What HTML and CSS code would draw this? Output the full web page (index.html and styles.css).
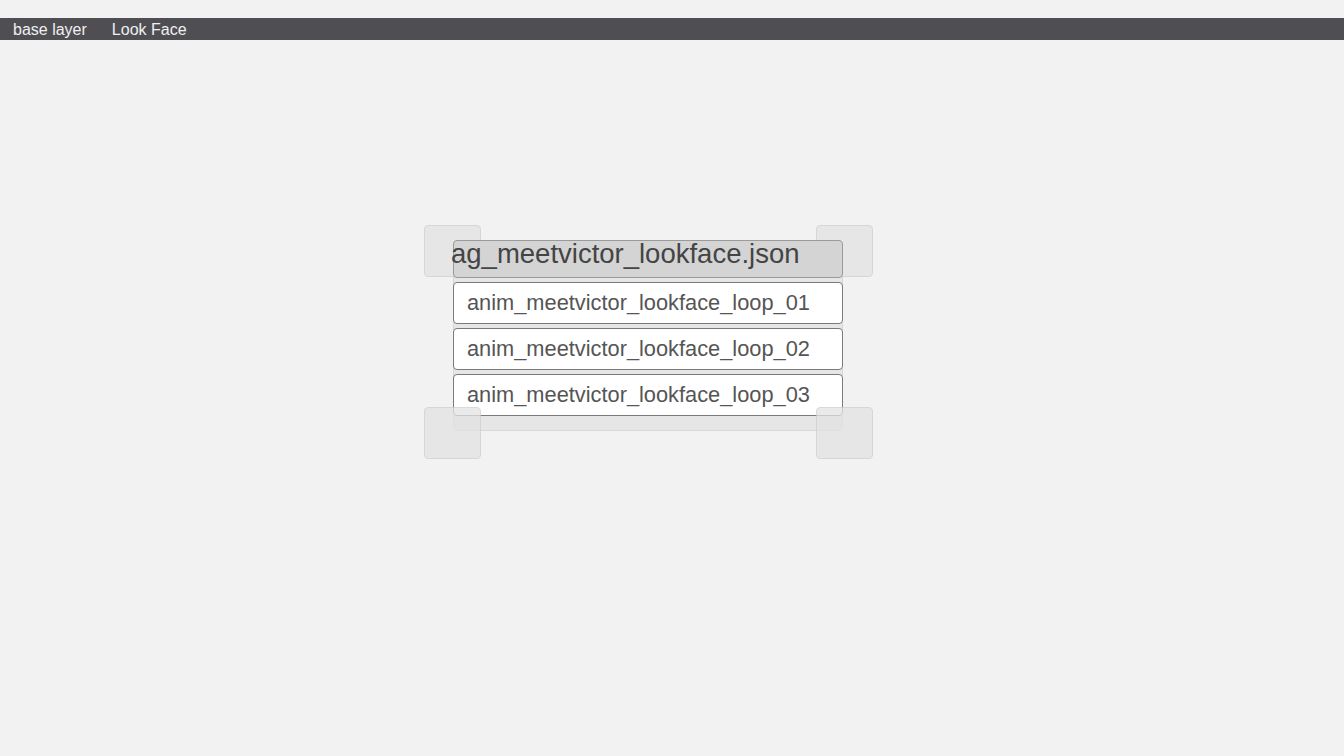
FILE: index.html
```html
<!DOCTYPE html>
<html>
<head>
<meta charset="utf-8">
<link rel="stylesheet" href="styles.css">
</head>
<body>
<div class="top-gap"></div>
<nav class="menubar">
  <span class="menu-item">base layer</span>
  <span class="menu-item">Look Face</span>
</nav>
<main class="stage">
  <div class="frame">
    <div class="panel">
      <div class="panel-header"><span class="header-text">ag_meetvictor_lookface.json</span></div>
      <div class="row">anim_meetvictor_lookface_loop_01</div>
      <div class="row">anim_meetvictor_lookface_loop_02</div>
      <div class="row">anim_meetvictor_lookface_loop_03</div>
    </div>
    <div class="handle handle-tl"></div>
    <div class="handle handle-tr"></div>
    <div class="handle handle-bl"></div>
    <div class="handle handle-br"></div>
  </div>
</main>
</body>
</html>
```
FILE: styles.css
```css
html, body {
  margin: 0;
  padding: 0;
  background: #f2f2f2;
  font-family: "Liberation Sans", Arial, sans-serif;
}
body {
  min-height: 756px;
}
.top-gap {
  height: 18px;
}
.menubar {
  height: 22px;
  box-sizing: border-box;
  padding-top: 1px;
  background: #4f4e53;
  display: flex;
  align-items: center;
  padding-left: 13px;
  gap: 25px;
}
.menu-item {
  color: #f0f0f0;
  font-size: 16px;
  line-height: 21px;
}
.stage {
  padding-top: 200px;
  padding-left: 453px;
  padding-bottom: 100px;
}
.frame {
  position: relative;
  width: 390px;
  height: 191px;
}
.panel {
  width: 390px;
  height: 191px;
  box-sizing: border-box;
  background: #e6e6e6;
  border: 1px solid #d8d8d8;
  border-radius: 4px;
  display: flex;
  flex-direction: column;
  gap: 4px;
}
.panel-header {
  margin: -1px -1px 0 -1px;
  height: 38px;
  box-sizing: border-box;
  background: #d4d4d4;
  border: 1px solid #9a9a9a;
  border-radius: 4px;
  position: relative;
  z-index: 2;
  white-space: nowrap;
}
.header-text {
  display: block;
  margin-left: -3px;
  font-size: 27.5px;
  line-height: 26px;
  color: #444;
}
.row {
  margin: 0 -1px;
  height: 42px;
  box-sizing: border-box;
  background: #fff;
  border: 1px solid #7a7a7a;
  border-radius: 4px;
  font-size: 21.8px;
  line-height: 40px;
  padding-left: 13px;
  color: #555;
  white-space: nowrap;
  position: relative;
  z-index: 2;
}
.handle {
  position: absolute;
  width: 57px;
  height: 52px;
  box-sizing: border-box;
  background: #e3e3e3;
  border: 1px solid #cdcdcd;
  border-radius: 4px;
  opacity: 0.75;
  z-index: 1;
}
.handle-bl, .handle-br {
  z-index: 3;
}
.handle-tl { left: -29px; top: -15px; }
.handle-tr { left: 363px; top: -15px; }
.handle-bl { left: -29px; top: 167px; }
.handle-br { left: 363px; top: 167px; }
```
